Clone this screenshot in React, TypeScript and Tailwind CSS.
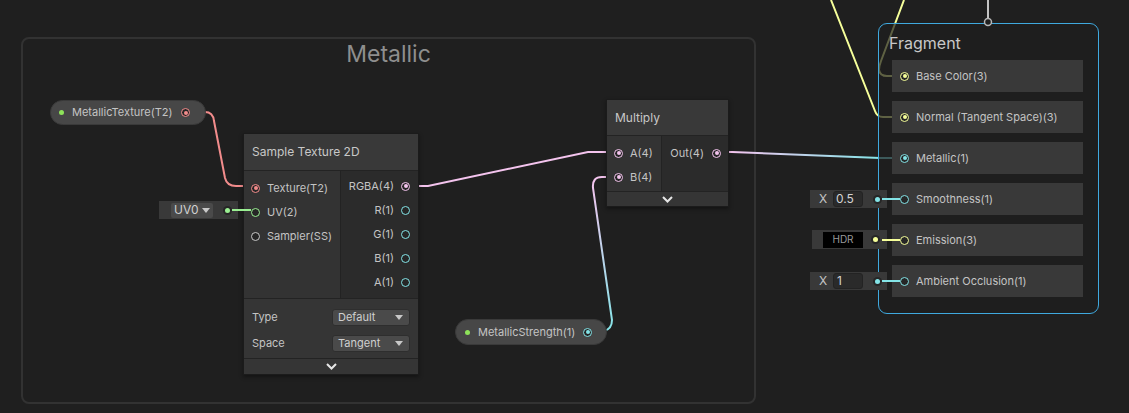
import React from "react";

type Kind = "tex" | "v1" | "v2" | "v3" | "v4" | "ss";

const RING: Record<Kind, string> = {
  tex: "border-[#f28c8c]",
  v1: "border-[#84e4e7]",
  v2: "border-[#9aef92]",
  v3: "border-[#f6ff9a]",
  v4: "border-[#f4c4ee]",
  ss: "border-[#c8c8c8]",
};

const DOT: Record<Kind, string> = {
  tex: "bg-[#f28c8c]",
  v1: "bg-[#84e4e7]",
  v2: "bg-[#9aef92]",
  v3: "bg-[#f6ff9a]",
  v4: "bg-[#f4c4ee]",
  ss: "bg-[#c8c8c8]",
};

function Port({ kind, on }: { kind: Kind; on?: boolean }) {
  return (
    <span
      className={`flex h-[9px] w-[9px] shrink-0 items-center justify-center rounded-full border-[1.5px] bg-[#262626] ${RING[kind]}`}
    >
      {on && <span className={`h-[4px] w-[4px] rounded-full ${DOT[kind]}`} />}
    </span>
  );
}

function Chevron() {
  return (
    <svg width="11" height="7" viewBox="0 0 11 7">
      <path d="M1 1l4.5 4.5L10 1" fill="none" stroke="#e6e6e6" strokeWidth="2" />
    </svg>
  );
}

function Caret() {
  return (
    <svg width="8" height="5" viewBox="0 0 8 5">
      <path d="M0 0h8L4 5z" fill="#c8c8c8" />
    </svg>
  );
}

function InRow({ kind, label, on }: { kind: Kind; label: string; on?: boolean }) {
  return (
    <div className="flex h-[24px] items-center gap-[7px] pl-[7px]">
      <Port kind={kind} on={on} />
      <span>{label}</span>
    </div>
  );
}

function OutRow({ kind, label, on }: { kind: Kind; label: string; on?: boolean }) {
  return (
    <div className="flex h-[24px] items-center justify-end gap-[7px] pr-[8px]">
      <span>{label}</span>
      <Port kind={kind} on={on} />
    </div>
  );
}

function Dropdown({ value }: { value: string }) {
  return (
    <div className="flex h-[17px] w-[78px] items-center justify-between rounded-[3px] border border-[#2e2e2e] bg-[#4a4a4a] pl-[5px] pr-[6px] text-[#d0d0d0]">
      <span>{value}</span>
      <Caret />
    </div>
  );
}

function FieldDot({ kind }: { kind: Kind }) {
  return (
    <span className="flex h-[9px] w-[9px] items-center justify-center rounded-full bg-[#262626]">
      <span className={`h-[5px] w-[5px] rounded-full ${DOT[kind]}`} />
    </span>
  );
}

const fragmentItems: { label: string; kind: Kind; on: boolean }[] = [
  { label: "Base Color(3)", kind: "v3", on: true },
  { label: "Normal (Tangent Space)(3)", kind: "v3", on: true },
  { label: "Metallic(1)", kind: "v1", on: true },
  { label: "Smoothness(1)", kind: "v1", on: false },
  { label: "Emission(3)", kind: "v3", on: false },
  { label: "Ambient Occlusion(1)", kind: "v1", on: false },
];

export default function App() {
  return (
    <div className="relative h-[413px] w-[1129px] overflow-hidden bg-[#1f1f1f] font-['Inter','Noto_Sans',sans-serif] text-[11px] text-[#c4c4c4]">
      {/* group */}
      <div className="absolute left-[21px] top-[37px] h-[367px] w-[735px] rounded-[8px] border-2 border-[#323232]">
        <div className="pt-[1px] text-center text-[23px] leading-[28px] text-[#8e8e8e]">Metallic</div>
      </div>

      {/* edges under nodes */}
      <svg className="pointer-events-none absolute left-0 top-0" width="1129" height="413">
        <defs>
          <linearGradient id="gB" gradientUnits="userSpaceOnUse" x1="0" y1="180" x2="0" y2="332">
            <stop offset="0" stopColor="#f4c4ee" />
            <stop offset="1" stopColor="#84e4e7" />
          </linearGradient>
          <linearGradient id="gM" gradientUnits="userSpaceOnUse" x1="730" y1="0" x2="880" y2="0">
            <stop offset="0" stopColor="#f4c4ee" />
            <stop offset="1" stopColor="#84e4e7" />
          </linearGradient>
        </defs>
        <path d="M190 112 L205 112 Q213 112 214 121 L225 178 Q227 186 236 186 L251 186" fill="none" stroke="#f28c8c" strokeWidth="2" />
        <path d="M409 186 L428 186 L588 152 L614 152" fill="none" stroke="#f4c4ee" strokeWidth="2" />
        <path d="M592 332 L604 331 Q612 329 612 320 L593 188 Q592 177 602 177 L614 177" fill="none" stroke="url(#gB)" strokeWidth="2" />
        <path d="M720 152 L732 152 L880 158 L900 158" fill="none" stroke="url(#gM)" strokeWidth="2" />
        <path d="M831 0 L875 111 Q877 117 883 117 L900 117" fill="none" stroke="#f6ff9a" strokeWidth="2" />
        <path d="M904 0 L881 61 Q879 66 879 70 Q880 76 887 76 L900 76" fill="none" stroke="#f6ff9a" strokeWidth="2" />
      </svg>

      {/* MetallicTexture property */}
      <div className="absolute left-[50px] top-[100px] flex h-[25px] w-[156px] items-center rounded-full border border-[#3a3a3a] bg-[#474747] pl-[8px] pr-[15px]">
        <span className="h-[5px] w-[5px] rounded-full bg-[#8ee35a]" />
        <span className="ml-[8px] flex-1">MetallicTexture(T2)</span>
        <Port kind="tex" on />
      </div>

      {/* UV field */}
      <div className="absolute left-[159px] top-[201px] flex h-[18px] w-[79px] items-center bg-[#393939] pl-[12px]">
        <div className="flex h-[15px] w-[42px] items-center justify-between rounded-[2px] bg-[#4a4a4a] px-[3px] text-[12px] text-[#d0d0d0]">
          <span>UV0</span>
          <Caret />
        </div>
        <span className="ml-[10px]">
          <FieldDot kind="v2" />
        </span>
      </div>

      {/* Sample Texture 2D */}
      <div className="absolute left-[243px] top-[133px] w-[176px] border border-[#1b1b1b] bg-[#333333] shadow-[0_2px_4px_rgba(0,0,0,0.4)]">
        <div className="flex h-[36px] items-center bg-[#393939] px-[8px] text-[12px] text-[#c8c8c8]">Sample Texture 2D</div>
        <div className="flex h-[128px] border-t border-[#232323]">
          <div className="w-[97px] border-r border-[#232323] bg-[#333333] pt-[5px]">
            <InRow kind="tex" label="Texture(T2)" on />
            <InRow kind="v2" label="UV(2)" />
            <InRow kind="ss" label="Sampler(SS)" />
          </div>
          <div className="flex-1 bg-[#2b2b2b] pt-[3px]">
            <OutRow kind="v4" label="RGBA(4)" on />
            <OutRow kind="v1" label="R(1)" />
            <OutRow kind="v1" label="G(1)" />
            <OutRow kind="v1" label="B(1)" />
            <OutRow kind="v1" label="A(1)" />
          </div>
        </div>
        <div className="flex h-[60px] flex-col gap-[8px] border-t border-[#232323] bg-[#353535] px-[8px] pt-[9px]">
          <div className="flex h-[18px] items-center justify-between">
            <span>Type</span>
            <Dropdown value="Default" />
          </div>
          <div className="flex h-[18px] items-center justify-between">
            <span>Space</span>
            <Dropdown value="Tangent" />
          </div>
        </div>
        <div className="flex h-[16px] items-center justify-center border-t border-[#232323] bg-[#353535]">
          <Chevron />
        </div>
      </div>

      {/* Multiply */}
      <div className="absolute left-[606px] top-[99px] w-[123px] border border-[#1b1b1b] bg-[#333333] shadow-[0_2px_4px_rgba(0,0,0,0.4)]">
        <div className="flex h-[35px] items-center bg-[#393939] px-[8px] text-[12px] text-[#c8c8c8]">Multiply</div>
        <div className="flex h-[56px] border-t border-[#232323]">
          <div className="w-[55px] border-r border-[#232323] bg-[#333333] pt-[5px]">
            <InRow kind="v4" label="A(4)" on />
            <InRow kind="v4" label="B(4)" on />
          </div>
          <div className="flex-1 bg-[#2b2b2b] pt-[5px]">
            <div className="flex h-[24px] items-center justify-end gap-[8px] pr-[7px]">
              <span>Out(4)</span>
              <Port kind="v4" on />
            </div>
          </div>
        </div>
        <div className="flex h-[15px] items-center justify-center border-t border-[#232323] bg-[#353535]">
          <Chevron />
        </div>
      </div>

      {/* MetallicStrength property */}
      <div className="absolute left-[455px] top-[319px] flex h-[26px] w-[152px] items-center rounded-full border border-[#3a3a3a] bg-[#474747] pl-[9px] pr-[14px]">
        <span className="h-[5px] w-[5px] rounded-full bg-[#8ee35a]" />
        <span className="ml-[8px] flex-1">MetallicStrength(1)</span>
        <Port kind="v1" on />
      </div>

      {/* Fragment block */}
      <div className="absolute left-[878px] top-[23px] h-[291px] w-[221px] rounded-[9px] border border-[#3fa9df] bg-[#1e1e1e]/70 pl-[13px]">
        <div className="pt-[9px] text-[16px] leading-[20px] text-[#c8c8c8]">
          <span className="-ml-[3px]">Fragment</span>
        </div>
        <div className="mt-[7px] flex flex-col gap-[9px]">
          {fragmentItems.map((it) => (
            <div key={it.label} className="flex h-[32px] w-[191px] items-center gap-[7px] bg-[#393939] pl-[8px]">
              <Port kind={it.kind} on={it.on} />
              <span>{it.label}</span>
            </div>
          ))}
        </div>
      </div>

      {/* inline value fields */}
      <div className="absolute left-[810px] top-[190px] flex h-[18px] w-[77px] items-center bg-[#393939] pl-[9px] text-[12px]">
        <span className="w-[14px]">X</span>
        <span className="flex h-[16px] w-[30px] items-center rounded-[3px] border border-[#232323] bg-[#2a2a2a] pl-[2px] text-[#d4d4d4]">0.5</span>
        <span className="ml-[10px]">
          <FieldDot kind="v1" />
        </span>
      </div>
      <div className="absolute left-[812px] top-[230px] flex h-[19px] w-[75px] items-center bg-[#393939] pl-[11px]">
        <span className="flex h-[16px] w-[40px] items-center justify-center bg-black text-[10px] text-[#9a9a9a]">HDR</span>
        <span className="ml-[8px]">
          <FieldDot kind="v3" />
        </span>
      </div>
      <div className="absolute left-[810px] top-[272px] flex h-[18px] w-[77px] items-center bg-[#393939] pl-[9px] text-[12px]">
        <span className="w-[14px]">X</span>
        <span className="flex h-[16px] w-[30px] items-center rounded-[3px] border border-[#232323] bg-[#2a2a2a] pl-[3px] text-[#d4d4d4]">1</span>
        <span className="ml-[10px]">
          <FieldDot kind="v1" />
        </span>
      </div>

      {/* stubs over nodes */}
      <svg className="pointer-events-none absolute left-0 top-0" width="1129" height="413">
        <path d="M232 210 L251 210" stroke="#9aef92" strokeWidth="2" />
        <path d="M882 199 L900 199" stroke="#84e4e7" strokeWidth="2" />
        <path d="M882 240 L900 240" stroke="#f6ff9a" strokeWidth="2" />
        <path d="M882 281 L900 281" stroke="#84e4e7" strokeWidth="2" />
        <path d="M988 0 L988 18" stroke="#c4c4c4" strokeWidth="2" />
        <circle cx="988" cy="22" r="3.5" fill="#1f1f1f" stroke="#b8b8b8" strokeWidth="1.5" />
      </svg>
    </div>
  );
}
